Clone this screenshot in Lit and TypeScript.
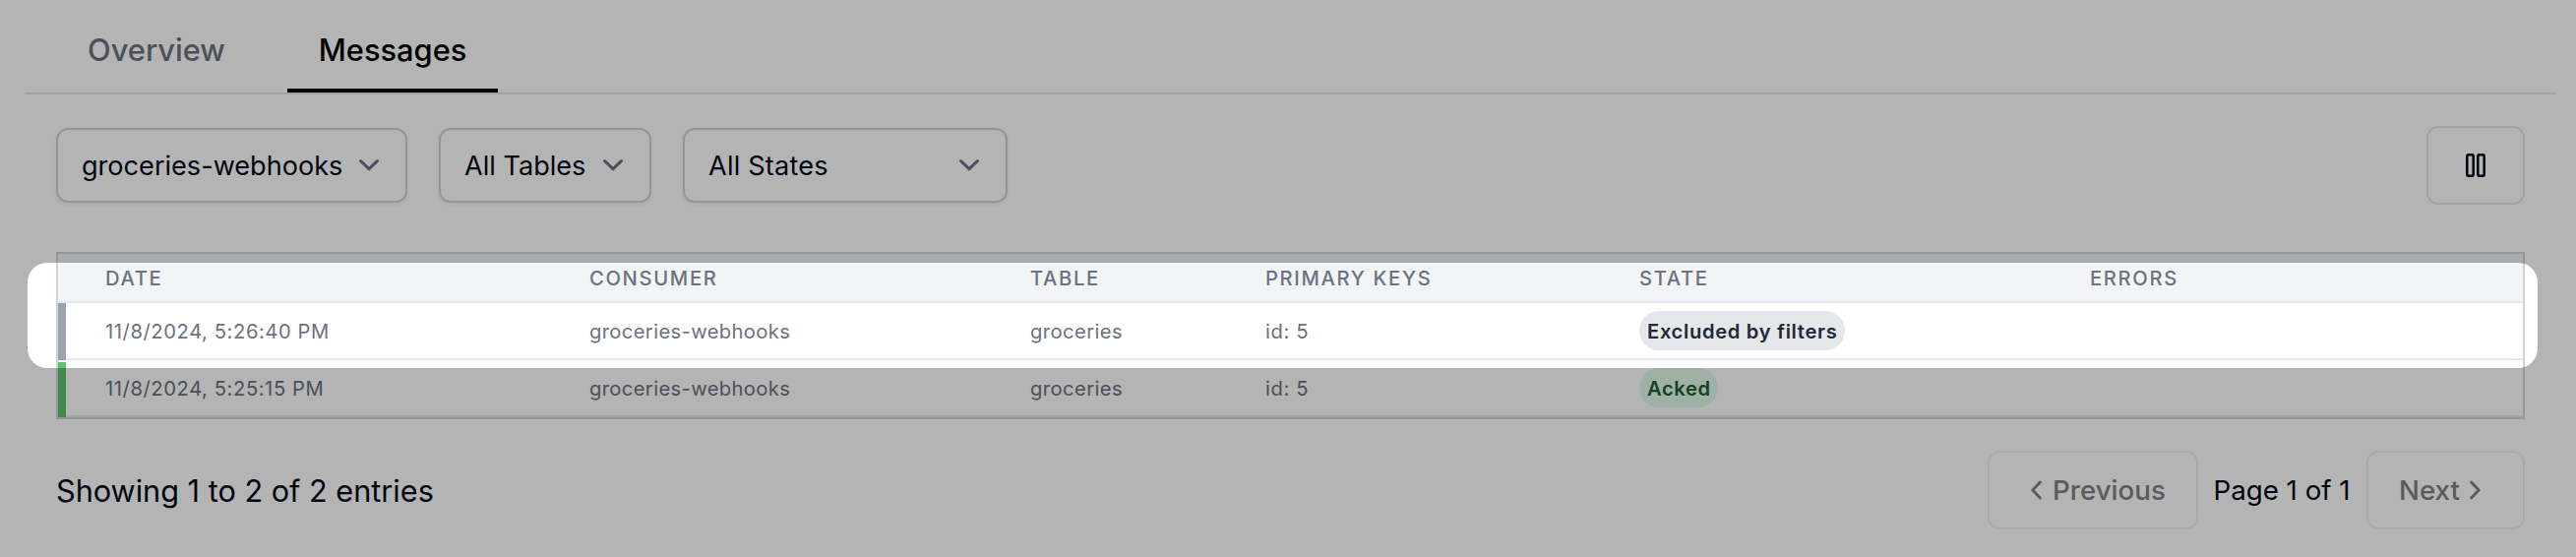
import { LitElement, html, css, svg } from "lit";
import { customElement } from "lit/decorators.js";
import { classMap } from "lit/directives/class-map.js";

interface Message {
  date: string;
  consumer: string;
  table: string;
  keys: string;
  state: string;
  kind: "excluded" | "acked";
}

const messages: Message[] = [
  { date: "11/8/2024, 5:26:40 PM", consumer: "groceries-webhooks", table: "groceries", keys: "id: 5", state: "Excluded by filters", kind: "excluded" },
  { date: "11/8/2024, 5:25:15 PM", consumer: "groceries-webhooks", table: "groceries", keys: "id: 5", state: "Acked", kind: "acked" },
];

const filters = [
  { label: "groceries-webhooks", size: "wide" },
  { label: "All Tables", size: "narrow" },
  { label: "All States", size: "medium" },
];

const headings = ["Date", "Consumer", "Table", "Primary Keys", "State", "Errors"];

const icon = (name: string, w: number, h: number, body: unknown) =>
  html`<svg class="icon ${name}" width=${w} height=${h} viewBox="0 0 ${w} ${h}" fill="none" stroke="currentColor" stroke-linecap="round" stroke-linejoin="round">${body}</svg>`;

const chevronDown = () => icon("down", 20, 12, svg`<path stroke-width="3" stroke-linejoin="miter" d="M1.6 1.6 10 9.6 18.4 1.6"/>`);
const chevronLeft = () => icon("left", 11, 20, svg`<path stroke-width="2.8" d="M9.4 2 1.8 10 9.4 18"/>`);
const chevronRight = () => icon("right", 11, 20, svg`<path stroke-width="2.8" d="M1.6 2 9.2 10 1.6 18"/>`);
const pause = () => icon("pause", 20, 24, svg`<rect x="1.3" y="1.2" width="6.4" height="21.6" rx="1.6" stroke-width="2.5"/><rect x="12.3" y="1.2" width="6.4" height="21.6" rx="1.6" stroke-width="2.5"/>`);

@customElement("app-root")
export class AppRoot extends LitElement {
  static styles = css`
    :host {
      display: block;
      position: relative;
      box-sizing: border-box;
      width: 100%;
      height: 566px;
      overflow: hidden;
      background: #fff;
      color: #020817;
      font-family: Inter, "Liberation Sans", sans-serif;
      white-space: nowrap;
    }
    * { box-sizing: border-box; }
    .icon { display: block; flex: none; }
    .tabs {
      display: flex;
      gap: 33px;
      height: 96px;
      margin: 0 20px 0 25px;
      padding-left: 32px;
      border-bottom: 2px solid #e2e8f0;
      font-size: 30.8px;
      font-weight: 500;
    }
    .tab {
      display: flex;
      align-items: center;
      justify-content: center;
      width: 202px;
      padding-top: 11px;
      border-bottom: 4px solid transparent;
      color: #6b7280;
    }
    .tab:first-child { padding-left: 2px; }
    .tab.active { width: 214px; color: #000; border-color: #000; }
    .content { padding: 32px 52px 0 57px; }
    .toolbar {
      display: flex;
      align-items: center;
      gap: 32px;
      height: 80px;
    }
    .select {
      display: flex;
      align-items: center;
      justify-content: space-between;
      height: 76px;
      padding: 0 27px 0 24px;
      border: 2px solid #d4d4d8;
      border-radius: 12px;
      box-shadow: 0 2px 4px rgba(0, 0, 0, 0.06);
      font-size: 27.1px;
    }
    .select .icon { color: #6b7280; }
    .wide { width: 357px; }
    .narrow { width: 216px; }
    .medium { width: 330px; letter-spacing: 0.2px; }
    .pause-button {
      display: flex;
      align-items: center;
      justify-content: center;
      width: 100px;
      height: 80px;
      margin-left: auto;
      border: 2px solid #e2e8f0;
      border-radius: 12px;
    }
    .table {
      margin-top: 48px;
      border: 2px solid #d1d5db;
      font-size: 20.2px;
      color: #6b7280;
    }
    .row {
      display: grid;
      grid-template-columns: 48px 492px 448px 239px 380px 458px 1fr;
      align-items: center;
      border-bottom: 2px solid #e2e8f0;
    }
    .head {
      height: 50px;
      background: #f3f4f6;
      font-weight: 450;
      letter-spacing: 1.66px;
      text-transform: uppercase;
    }
    .body-row { height: 58px; }
    .marker {
      width: 8px;
      height: 58px;
      margin-bottom: -2px;
      align-self: start;
    }
    .excluded .marker { background: #9ca3af; }
    .acked .marker { height: 56px; margin-top: 2px; background: #5fc26b; }
    .cell { padding-top: 1px; }
    .date { letter-spacing: 0.58px; }
    .consumer { letter-spacing: 0.36px; }
    .name { letter-spacing: 0.42px; }
    .keys { letter-spacing: 0.6px; }
    .badge {
      display: flex;
      align-items: center;
      width: fit-content;
      height: 40px;
      padding: 1px 7.5px 0 8px;
      border-radius: 20px;
      font-weight: 600;
      letter-spacing: 0.66px;
    }
    .excluded .badge { background: #e5e7eb; color: #1f2937; }
    .acked .badge { background: #e2fbe9; color: #235c30; letter-spacing: 0.6px; }
    .footer {
      display: flex;
      align-items: center;
      height: 80px;
      margin-top: 32px;
    }
    .summary { flex: 1; font-size: 30.65px; }
    .page-button {
      display: flex;
      align-items: center;
      height: 80px;
      border: 2px solid #f0f0f3;
      border-radius: 12px;
      color: #808188;
      font-size: 27.7px;
      font-weight: 500;
    }
    .previous { width: 214px; padding-left: 42px; gap: 11px; }
    .next { width: 161px; padding-left: 31px; gap: 10px; }
    .page { width: 171px; padding-right: 1px; text-align: center; font-size: 27.7px; }
    .spotlight {
      position: absolute;
      top: 266.5px;
      left: 28px;
      right: 39px;
      height: 107px;
      border-radius: 20px;
      box-shadow: 0 0 0 3000px rgba(0, 0, 0, 0.294);
      pointer-events: none;
    }
  `;

  render() {
    return html`
      <nav class="tabs">
        <div class="tab">Overview</div>
        <div class="tab active">Messages</div>
      </nav>
      <main class="content">
        <div class="toolbar">
          ${filters.map((f) => html`<div class="select ${f.size}"><span>${f.label}</span>${chevronDown()}</div>`)}
          <div class="pause-button">${pause()}</div>
        </div>
        <section class="table">
          <div class="row head"><span></span>${headings.map((h) => html`<span>${h}</span>`)}</div>
          ${messages.map(
            (m) => html`
              <div class=${classMap({ row: true, "body-row": true, [m.kind]: true })}>
                <span class="marker"></span>
                <span class="cell date">${m.date}</span>
                <span class="cell consumer">${m.consumer}</span>
                <span class="cell name">${m.table}</span>
                <span class="cell keys">${m.keys}</span>
                <span><span class="badge">${m.state}</span></span>
                <span></span>
              </div>
            `
          )}
        </section>
        <footer class="footer">
          <div class="summary">Showing 1 to 2 of 2 entries</div>
          <div class="page-button previous">${chevronLeft()}<span>Previous</span></div>
          <div class="page">Page 1 of 1</div>
          <div class="page-button next"><span>Next</span>${chevronRight()}</div>
        </footer>
      </main>
      <div class="spotlight"></div>
    `;
  }
}
